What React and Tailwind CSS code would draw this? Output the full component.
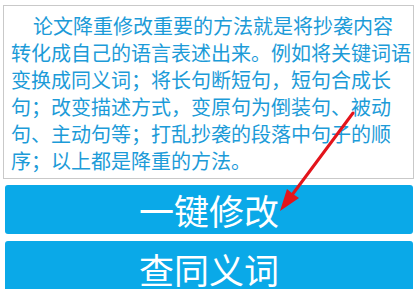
import React from "react"

const TEXT =
  "论文降重修改重要的方法就是将抄袭内容转化成自己的语言表述出来。例如将关键词语变换成同义词；将长句断短句，短句合成长句；改变描述方式，变原句为倒装句、被动句、主动句等；打乱抄袭的段落中句子的顺序；以上都是降重的方法。"

const FONT = { fontFamily: "'Noto Sans CJK SC', 'Noto Sans', sans-serif" }

export default function App() {
  return (
    <div className="relative w-[416px] h-[289px] overflow-hidden bg-white" style={FONT}>
      <div className="ml-[3px] mt-[5px] w-[411px] border border-[#c9c9c9] pl-[7px] pr-[2px] pt-[6px] pb-[4px]">
        <p className="text-[20px] leading-[27px] text-[#1c9bd8] indent-[22px]">{TEXT}</p>
      </div>

      <div className="ml-[5px] mt-[6px] w-[408px] flex flex-col gap-[7px]">
        <button className="h-[49px] rounded-[3px] bg-[#0aa9e8] text-white text-[35px] leading-none flex items-center justify-center">
          一键修改
        </button>
        <button className="h-[50px] rounded-[3px] bg-[#0aa9e8] text-white text-[35px] leading-none flex items-center justify-center pt-[4px]">
          查同义词
        </button>
      </div>

      {/* red annotation arrow */}
      <svg className="absolute left-0 top-0 pointer-events-none" width="416" height="289" viewBox="0 0 416 289">
        <line x1="353" y1="113" x2="292" y2="195" stroke="#e3141b" strokeWidth="3" strokeLinecap="round" />
        <polygon points="280,211 299,198 293,194 287,189" fill="#e3141b" />
      </svg>
    </div>
  )
}
